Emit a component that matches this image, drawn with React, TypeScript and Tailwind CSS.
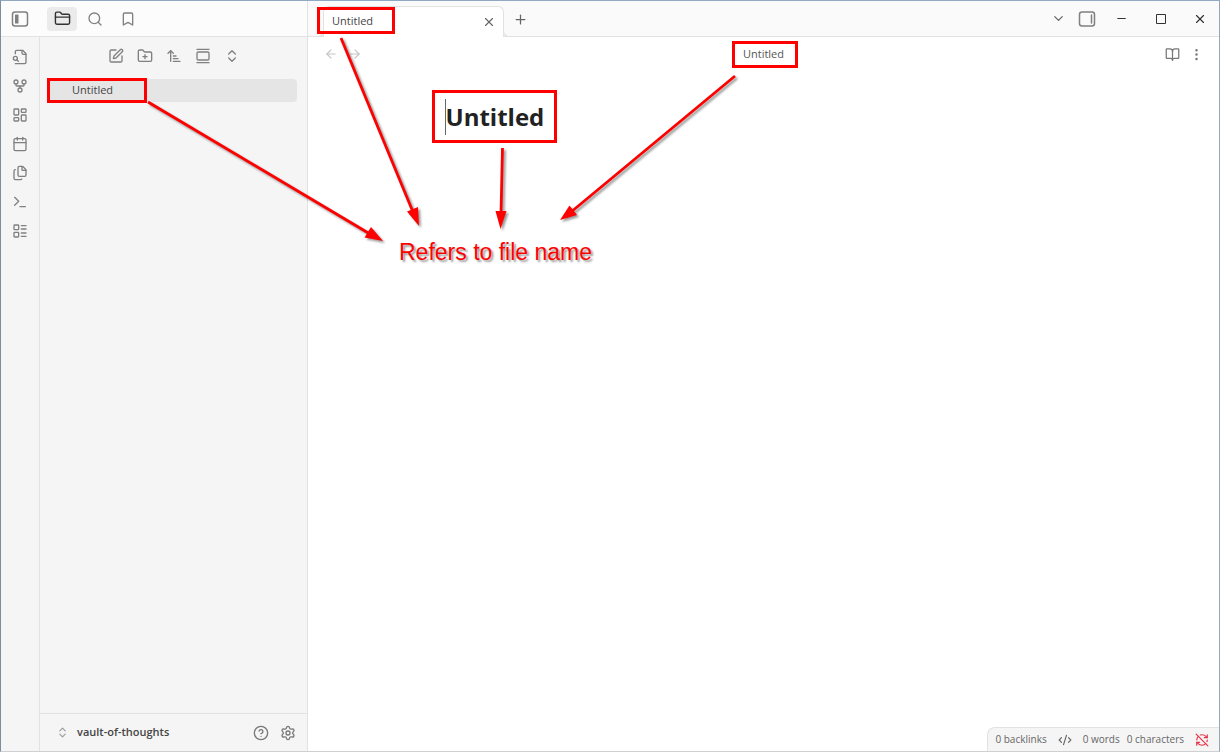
import type { ReactNode } from "react";
import {
  ArrowLeft,
  ArrowRight,
  ArrowUpNarrowWide,
  BookOpen,
  Bookmark,
  Calendar,
  ChevronDown,
  ChevronsUpDown,
  CodeXml,
  EllipsisVertical,
  Files,
  FolderClosed,
  FolderPlus,
  GalleryVertical,
  GitFork,
  HelpCircle,
  LayoutDashboard,
  LayoutList,
  Minus,
  Plus,
  RefreshCwOff,
  Search,
  Settings,
  SquarePen,
  Terminal,
  X,
} from "lucide-react";

function IconButton({ label, className = "", children }: { label: string; className?: string; children: ReactNode }) {
  return (
    <button type="button" aria-label={label} className={`flex shrink-0 items-center justify-center ${className}`}>
      {children}
    </button>
  );
}

function PanelIcon({ side }: { side: "left" | "right" }) {
  return (
    <svg width="18" height="18" viewBox="0 0 18 18" fill="none" stroke="currentColor">
      <rect x="1.5" y="2" width="15" height="14" rx="2.5" strokeWidth="1.5" />
      {side === "left" ? (
        <rect x="4" y="4.5" width="3.5" height="9" rx="0.5" fill="currentColor" stroke="none" />
      ) : (
        <path d="M13.5 5v8" strokeWidth="1.5" strokeLinecap="round" />
      )}
    </svg>
  );
}

function FileLookup({ size = 16, strokeWidth = 2 }: { size?: number; strokeWidth?: number }) {
  return (
    <svg
      width={size}
      height={size}
      viewBox="0 0 24 24"
      fill="none"
      stroke="currentColor"
      strokeWidth={strokeWidth}
      strokeLinecap="round"
      strokeLinejoin="round"
    >
      <path d="M5 22h14a2 2 0 0 0 2-2V7l-5-5H7a2 2 0 0 0-2 2v3" />
      <path d="M15 2v4a2 2 0 0 0 2 2h4" />
      <circle cx="5" cy="14" r="3" />
      <path d="m9.500 18.500-2.200-2.200" />
    </svg>
  );
}

const ribbon = [
  { label: "Open quick switcher", Icon: FileLookup },
  { label: "Open graph view", Icon: GitFork },
  { label: "Create new canvas", Icon: LayoutDashboard },
  { label: "Open today's daily note", Icon: Calendar },
  { label: "Insert template", Icon: Files },
  { label: "Open command palette", Icon: Terminal },
  { label: "Create new base", Icon: LayoutList },
];

const fileActions = [
  { label: "New note", Icon: SquarePen },
  { label: "New folder", Icon: FolderPlus },
  { label: "Change sort order", Icon: ArrowUpNarrowWide },
  { label: "Auto-reveal current file", Icon: GalleryVertical },
  { label: "Expand all", Icon: ChevronsUpDown },
];

function Sidebar() {
  return (
    <aside className="flex w-[307px] shrink-0 flex-col border-r border-[#e2e2e2] bg-[#f5f5f5]">
      <div className="flex h-9 shrink-0 items-center border-b border-[#e2e2e2] bg-[#fcfcfc] text-[#808080]">
        <IconButton label="Collapse left sidebar" className="w-[38px]">
          <PanelIcon side="left" />
        </IconButton>
        <div className="flex items-center gap-[3px] pl-2">
          <IconButton label="Files" className="h-6 w-[30px] rounded bg-[#ebebeb] text-[#333]">
            <FolderClosed size={17} strokeWidth={2} />
          </IconButton>
          <IconButton label="Search" className="h-6 w-[30px]">
            <Search size={16} strokeWidth={2} />
          </IconButton>
          <IconButton label="Bookmarks" className="h-6 w-[30px]">
            <Bookmark size={16} strokeWidth={2} />
          </IconButton>
        </div>
      </div>
      <div className="flex flex-1">
        <nav aria-label="Ribbon" className="flex w-[39px] shrink-0 flex-col border-r border-[#e2e2e2] pt-[5px] text-[#808080]">
          {ribbon.map(({ label, Icon }) => (
            <IconButton key={label} label={label} className="h-[29px] w-full">
              <Icon size={16} strokeWidth={2} />
            </IconButton>
          ))}
        </nav>
        <div className="flex flex-1 flex-col">
          <div className="flex h-[42px] items-start justify-center pt-[7px] text-[#808080]">
            {fileActions.map(({ label, Icon }) => (
              <IconButton key={label} label={label} className="h-6 w-[29px]">
                <Icon size={16} strokeWidth={2} />
              </IconButton>
            ))}
          </div>
          <ul className="flex-1 pr-[10px] pl-2">
            <li>
              <a href="#untitled" className="flex h-[23px] items-center rounded bg-[#e5e5e5] pl-6 text-[#444]">
                Untitled
              </a>
            </li>
          </ul>
          <div className="flex h-[38px] items-center border-t border-[#e2e2e2] pr-[6px] pl-4 text-[#777]">
            <button type="button" className="flex flex-1 items-center gap-2 font-semibold text-[#444]">
              <ChevronsUpDown size={13} strokeWidth={2} className="text-[#999]" />
              vault-of-thoughts
            </button>
            <IconButton label="Help" className="w-[27px]">
              <HelpCircle size={16} strokeWidth={2} />
            </IconButton>
            <IconButton label="Settings" className="w-[27px]">
              <Settings size={16} strokeWidth={2} />
            </IconButton>
          </div>
        </div>
      </div>
    </aside>
  );
}

function TabBar() {
  return (
    <header className="flex h-9 shrink-0 items-end border-b border-[#e2e2e2] bg-[#fafafa] pl-[15px] text-[#666]">
      <div className="relative -mb-px flex h-[31px] w-[181px] items-center rounded-t-md border border-b-0 border-[#e2e2e2] bg-white pr-2 pb-px pl-2">
        <span className="absolute bottom-0 -left-[6px] size-[6px] rounded-br-md border-r border-b border-[#e2e2e2] bg-[#fafafa]" />
        <span className="absolute -right-[6px] bottom-0 size-[6px] rounded-bl-md border-b border-l border-[#e2e2e2] bg-[#fafafa]" />
        <span className="flex-1 text-[#444]">Untitled</span>
        <IconButton label="Close tab" className="size-3">
          <X size={14} strokeWidth={2} className="shrink-0" />
        </IconButton>
      </div>
      <IconButton label="New tab" className="h-[34px] w-8">
        <Plus size={15} strokeWidth={2} />
      </IconButton>
      <div className="ml-auto flex h-[35px] items-center">
        <IconButton label="Tab list" className="h-full w-7">
          <ChevronDown size={15} strokeWidth={2} />
        </IconButton>
        <IconButton label="Expand right sidebar" className="h-full w-[30px] text-[#808080]">
          <PanelIcon side="right" />
        </IconButton>
        <IconButton label="Minimize" className="h-full w-[39px] text-[#333]">
          <Minus size={13} strokeWidth={2} />
        </IconButton>
        <IconButton label="Maximize" className="h-full w-[39px] text-[#333]">
          <svg width="10" height="10" viewBox="0 0 10 10" fill="none" stroke="currentColor">
            <path d="M.5.5h9v9h-9z" />
          </svg>
        </IconButton>
        <IconButton label="Close window" className="h-full w-[39px] text-[#333]">
          <X size={14} strokeWidth={2} />
        </IconButton>
      </div>
    </header>
  );
}

function Note() {
  return (
    <main className="flex flex-1 flex-col bg-white">
      <div className="grid h-[34px] grid-cols-3 items-center pr-[11px] pl-[11px] text-[#777]">
        <div className="flex text-[#c4c4c4]">
          <IconButton label="Back" className="w-6">
            <ArrowLeft size={14} strokeWidth={2} />
          </IconButton>
          <IconButton label="Forward" className="w-6">
            <ArrowRight size={14} strokeWidth={2} />
          </IconButton>
        </div>
        <div className="text-center text-[#555]">Untitled</div>
        <div className="flex justify-end">
          <IconButton label="Reading view" className="w-6">
            <BookOpen size={15} strokeWidth={2} />
          </IconButton>
          <IconButton label="More options" className="w-6">
            <EllipsisVertical size={15} strokeWidth={2} />
          </IconButton>
        </div>
      </div>
      <div className="mx-auto w-full max-w-[638px] pt-7">
        <h1 className="flex h-9 items-center border-l border-[#666] text-2xl font-bold text-[#222]">Untitled</h1>
      </div>
      <footer className="mt-auto flex h-6 items-center gap-[11px] self-end rounded-tl-lg border-t border-l border-[#e2e2e2] bg-[#f5f5f5] pr-[10px] pl-[7px] text-[10px] text-[#666]">
        <span>0 backlinks</span>
        <CodeXml size={14} strokeWidth={2} />
        <span className="flex gap-[7px]">
          <span>0 words</span>
          <span>0 characters</span>
        </span>
        <RefreshCwOff size={14} strokeWidth={2} className="text-[#e93147]" />
      </footer>
    </main>
  );
}

const arrows = [
  { line: "M148 102L370 234", head: "M383 241L364.500 237.500L371 227Z" },
  { line: "M341 38L413 212", head: "M419 226L407 211.500L418 207Z" },
  { line: "M502.500 148L501 214", head: "M500.500 229L495.500 211H506.500Z" },
  { line: "M735 76L571 212", head: "M560 220L569.500 205.500L577 215Z" },
];

function Annotations() {
  return (
    <div className="pointer-events-none absolute -inset-px overflow-hidden">
      <div className="absolute top-[7px] left-[317px] h-[27px] w-[78px] border-3 border-[#ff0000]" />
      <div className="absolute top-[78px] left-[47px] h-[25px] w-[100px] border-3 border-[#ff0000]" />
      <div className="absolute top-[41px] left-[732px] h-[27px] w-[66px] border-3 border-[#ff0000]" />
      <div className="absolute top-[90px] left-[432px] h-[53px] w-[125px] border-3 border-[#ff0000]" />
      <svg className="absolute top-0 left-0 drop-shadow-[2px_2px_1px_rgba(0,0,0,0.4)]" width="800" height="300" fill="#ff0000" stroke="#ff0000">
        {arrows.map(({ line, head }) => (
          <g key={line}>
            <path d={line} strokeWidth="2.8" />
            <path d={head} stroke="none" />
          </g>
        ))}
      </svg>
      <p className="absolute top-[238px] left-[399px] font-['Liberation_Sans',Arial,sans-serif] text-[23px] leading-7 whitespace-nowrap text-[#ff0000] [text-shadow:2px_2px_2px_rgba(0,0,0,0.4)]">
        Refers to file name
      </p>
    </div>
  );
}

export default function App() {
  return (
    <div className="relative flex min-h-screen border border-t-[#8fa9c0] border-r-[#9aa3b8] border-b-[#cfcfd4] border-l-[#7f8ba0] font-['Open_Sans','Noto_Sans',sans-serif] text-[11px]">
      <Sidebar />
      <div className="flex min-w-0 flex-1 flex-col">
        <TabBar />
        <Note />
      </div>
      <Annotations />
    </div>
  );
}
